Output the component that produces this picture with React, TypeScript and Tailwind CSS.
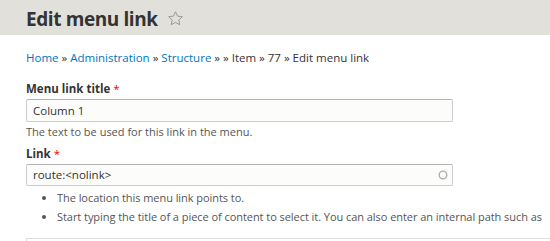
export default function App() {
  const font = { fontFamily: '"Open Sans", "Lucida Grande", sans-serif' };
  return (
    <div className="w-[550px] h-[241px] overflow-hidden bg-white text-[#333]" style={font}>
      {/* Page title */}
      <div className="h-[35px] bg-[#e1e0da] px-[26px] flex items-center">
        <h1 className="text-[19px] font-bold text-[#333] leading-none tracking-[-0.4px] mt-[3px]">Edit menu link</h1>
        <svg className="ml-[9px] mt-[2px]" width="17" height="17" viewBox="0 0 24 24" fill="none" stroke="#9a9a94" strokeWidth="1.4" strokeLinejoin="round">
          <path d="M12 2.5l2.9 6.2 6.8.8-5 4.6 1.3 6.7L12 17.5l-6 3.3 1.3-6.7-5-4.6 6.8-.8z" />
        </svg>
      </div>

      <div className="pl-[26px]">
        {/* Breadcrumb */}
        <nav className="mt-[16px] text-[11.5px] leading-[14px]">
          <a className="text-[#0074bd]">Home</a> » <a className="text-[#0074bd]">Administration</a> »{" "}
          <a className="text-[#0074bd]">Structure</a> » » Item » 77 » Edit menu link
        </nav>

        {/* Menu link title */}
        <div className="mt-[17px]">
          <label className="block text-[11.5px] font-bold leading-[14px]">
            Menu link title <span className="text-[#e00] font-normal">*</span>
          </label>
          <div className="mt-[3px] w-[427px] h-[23px] border border-[#ccc] border-t-[#b4b4b4] bg-[#fcfcfa] rounded-[2px] flex items-center px-[6px] text-[11.5px]">
            Column 1
          </div>
          <p className="mt-[3px] text-[11px] leading-[14px] text-[#555]">The text to be used for this link in the menu.</p>
        </div>

        {/* Link */}
        <div className="mt-[8px]">
          <label className="block text-[11.5px] font-bold leading-[14px]">
            Link <span className="text-[#e00] font-normal">*</span>
          </label>
          <div className="mt-[3px] w-[427px] h-[22px] border border-[#ccc] border-t-[#b4b4b4] bg-[#fcfcfa] rounded-[2px] flex items-center justify-between pl-[6px] pr-[4px] text-[11.5px]">
            <span>route:&lt;nolink&gt;</span>
            <svg width="10" height="10" viewBox="0 0 10 10">
              <circle cx="5" cy="5" r="3.8" fill="none" stroke="#aaa" strokeWidth="1.3" />
            </svg>
          </div>
          <ul className="mt-[2px] pl-[31px] text-[11px] leading-[19px] text-[#555] list-disc whitespace-nowrap tracking-[-0.05px]">
            <li>The location this menu link points to.</li>
            <li>Start typing the title of a piece of content to select it. You can also enter an internal path such as</li>
          </ul>
        </div>

        <div className="mt-[12px] h-[20px] border-t border-l border-[#ddd]"></div>
      </div>
    </div>
  );
}
